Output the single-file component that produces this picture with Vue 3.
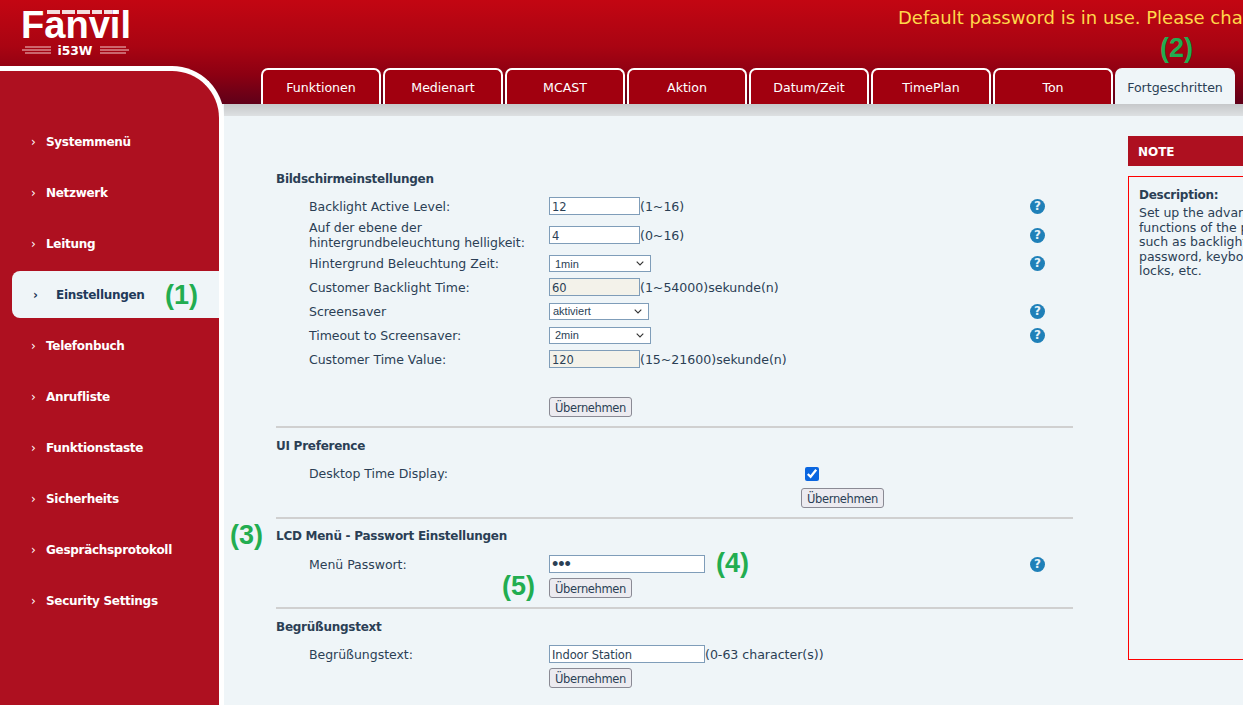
<script setup>
const menu = [
  'Systemmenü',
  'Netzwerk',
  'Leitung',
  'Einstellungen',
  'Telefonbuch',
  'Anrufliste',
  'Funktionstaste',
  'Sicherheits',
  'Gesprächsprotokoll',
  'Security Settings',
]

const tabs = ['Funktionen', 'Medienart', 'MCAST', 'Aktion', 'Datum/Zeit', 'TimePlan', 'Ton', 'Fortgeschritten']

const screenRows = [
  { label: 'Backlight Active Level:', type: 'input', value: '12', hint: '(1~16)', help: true },
  { label: 'Auf der ebene der hintergrundbeleuchtung helligkeit:', type: 'input', value: '4', hint: '(0~16)', help: true, tall: true },
  { label: 'Hintergrund Beleuchtung Zeit:', type: 'select', value: '1min', help: true, short: true },
  { label: 'Customer Backlight Time:', type: 'off', value: '60', hint: '(1~54000)sekunde(n)' },
  { label: 'Screensaver', type: 'select', value: 'aktiviert', help: true, narrow: true },
  { label: 'Timeout to Screensaver:', type: 'select', value: '2min', help: true },
  { label: 'Customer Time Value:', type: 'off', value: '120', hint: '(15~21600)sekunde(n)' },
]
</script>

<template>
  <div class="page">
    <header class="top">
      <svg class="logo" width="112" height="50" viewBox="0 0 112 50">
        <rect x="27" y="1" width="13" height="4" fill="#f4dcdc" />
        <rect x="42" y="1" width="13" height="4" fill="#f4dcdc" />
        <rect x="57" y="1" width="13" height="4" fill="#f4dcdc" />
        <rect x="72" y="1" width="10" height="4" fill="#f4dcdc" />
        <rect x="84" y="1" width="8" height="4" fill="#f4dcdc" />
        <rect x="94" y="1" width="5" height="4" fill="#f4dcdc" />
        <text x="1" y="29" class="logo-name" textLength="110" lengthAdjust="spacingAndGlyphs">Fanvil</text>
        <text x="55" y="46" class="logo-model" text-anchor="middle" textLength="35" lengthAdjust="spacingAndGlyphs">i53W</text>
        <g stroke="#f2c9c9" stroke-width="1">
          <path d="M5 38 H31 M2 41 H31 M5 44 H31" />
          <path d="M80 38 H106 M80 41 H109 M80 44 H106" />
        </g>
      </svg>
      <div class="warning">Default password is in use. Please change it</div>
    </header>

    <nav class="tabs">
      <a v-for="(tab, i) in tabs" :key="tab" class="tab" :class="{ current: i === 7 }">{{ tab }}</a>
    </nav>

    <aside class="side">
      <ul>
        <li v-for="item in menu" :key="item" :class="{ active: item === 'Einstellungen' }">
          <span class="arrow">›</span>{{ item }}
        </li>
      </ul>
    </aside>

    <main class="main">
      <div class="band"></div>
      <div class="body">
        <form class="form" @submit.prevent>
          <h3 class="head-first">Bildschirmeinstellungen</h3>
          <div v-for="row in screenRows" :key="row.label" class="row" :class="{ tall: row.tall, short: row.short }">
            <label>{{ row.label }}</label>
            <div class="control">
              <select v-if="row.type === 'select'" :class="{ narrow: row.narrow }">
                <option>{{ row.value }}</option>
              </select>
              <input v-else type="text" :value="row.value" :disabled="row.type === 'off'" />
              <span v-if="row.hint" class="hint">{{ row.hint }}</span>
            </div>
            <span v-if="row.help" class="help">?</span>
          </div>
          <div class="actions first"><button type="button">Übernehmen</button></div>
          <hr />

          <h3>UI Preference</h3>
          <div class="row">
            <label>Desktop Time Display:</label>
            <div class="control"><input class="check" type="checkbox" checked /></div>
          </div>
          <div class="actions ui"><button type="button">Übernehmen</button></div>
          <hr />

          <h3 class="head-lcd">LCD Menü - Passwort Einstellungen</h3>
          <div class="row pw">
            <label>Menü Passwort:</label>
            <div class="control"><input class="wide secret" type="password" value="123" /></div>
            <span class="help">?</span>
          </div>
          <div class="actions"><button type="button">Übernehmen</button></div>
          <hr />

          <h3 class="head-last">Begrüßungstext</h3>
          <div class="row">
            <label>Begrüßungstext:</label>
            <div class="control">
              <input class="wide" type="text" value="Indoor Station" />
              <span class="hint">(0-63 character(s))</span>
            </div>
          </div>
          <div class="actions"><button type="button">Übernehmen</button></div>
        </form>

        <section class="note">
          <h4>NOTE</h4>
          <div class="note-box">
            <strong>Description:</strong>
            <p>Set up the advanced<br />functions of the phone,<br />such as backlight, screen<br />password, keyboard<br />locks, etc.</p>
          </div>
        </section>
      </div>
    </main>

    <!-- callouts drawn over the screenshot -->
    <span class="mark m1">(1)</span>
    <span class="mark m2">(2)</span>
    <span class="mark m3">(3)</span>
    <span class="mark m4">(4)</span>
    <span class="mark m5">(5)</span>
  </div>
</template>

<style scoped>
.page {
  position: relative;
  width: 1243px;
  height: 705px;
  overflow: hidden;
  display: grid;
  grid-template-columns: 224px 1fr;
  grid-template-rows: 66px 38px 1fr;
  background: #eff5f8;
  font-family: "DejaVu Sans", Verdana, sans-serif;
  font-size: 12.5px;
  letter-spacing: -0.03px;
  color: #2b3f55;
}

.top {
  grid-area: 1 / 1 / 3 / 3;
  background: linear-gradient(#c30612 0%, #a90412 45%, #8c0012 72%, #5f0019 100%);
  display: flex;
  align-items: flex-start;
  white-space: nowrap;
}

.logo {
  margin: 9px 0 0 20px;
  flex: none;
}

.logo-name {
  font-family: "Liberation Sans", Arial, sans-serif;
  font-weight: 700;
  font-size: 39px;
  fill: #fff;
}

.logo-model {
  font-family: "DejaVu Sans", sans-serif;
  font-weight: 700;
  font-size: 13px;
  fill: #fff;
}

.warning {
  margin: 7px 0 0 766px;
  font-size: 18px;
  letter-spacing: 0;
  line-height: 22px;
  color: #ffd84a;
}

.tabs {
  grid-area: 2 / 2;
  display: flex;
  gap: 2px;
  padding: 2px 0 0 37px;
  z-index: 1;
}

.tab {
  width: 120px;
  height: 36px;
  box-sizing: border-box;
  border: 2px solid #fff;
  border-bottom: 0;
  border-radius: 7px 7px 0 0;
  background: #a1000f;
  color: #fff;
  font-size: 12.6px;
  text-align: center;
  line-height: 36px;
}

.tab.current {
  background: #eff5f8;
  border-color: #eff5f8;
  color: #2b3f55;
}

.side {
  grid-area: 2 / 1 / 4 / 2;
  box-sizing: border-box;
  width: 224px;
  border: solid #fff;
  border-width: 5px 5px 0 0;
  border-top-right-radius: 52px;
  background: #ae1020;
  z-index: 2;
}

.side ul {
  list-style: none;
  margin: 0;
  padding: 45px 0 0;
}

.side li {
  height: 51px;
  line-height: 53px;
  padding-left: 31px;
  color: #fff;
  font-size: 12px;
  font-weight: 700;
  letter-spacing: -0.3px;
}

.arrow {
  display: inline-block;
  width: 15px;
  font-weight: 400;
  font-size: 12px;
}

.side li.active {
  box-sizing: border-box;
  height: 47px;
  line-height: 49px;
  margin: 2px 0 2px 12px;
  padding-left: 21px;
  border-radius: 8px 0 0 8px;
  background: #eff5f8;
  color: #1f3a5a;
}

.side li.active .arrow {
  width: 23px;
  font-weight: 700;
}

.main {
  grid-area: 3 / 2;
  min-width: 0;
}

.band {
  height: 12px;
  background: linear-gradient(#c6c8ca, #dde0e2);
}

.body {
  display: flex;
  align-items: flex-start;
  padding-left: 52px;
}

.form {
  flex: none;
  width: 797px;
  padding-top: 50px;
}

h3 {
  margin: 5px 0 4px;
  height: 24px;
  line-height: 26px;
  font-size: 12px;
  font-weight: 700;
  letter-spacing: -0.26px;
  color: #2b3f55;
}

.head-first {
  margin-top: 0;
}

.head-lcd {
  margin: 4px 0 5px;
}

.row {
  display: grid;
  grid-template-columns: 240px 1fr 16px;
  align-items: center;
  height: 24px;
  margin-left: 33px;
  margin-right: 27px;
}

.row.tall {
  height: 34px;
}

.row.short {
  height: 23px;
}

.row label {
  line-height: 15px;
}

.control {
  display: flex;
  align-items: center;
}

.hint {
  font-size: 12.6px;
}

input[type="text"],
input[type="password"] {
  box-sizing: border-box;
  width: 91px;
  height: 18px;
  padding: 1px 2px 0;
  border: 1px solid #7f9db9;
  border-radius: 0;
  outline: 0;
  background: #fff;
  font-family: inherit;
  font-size: 11.5px;
  letter-spacing: -0.1px;
  color: #2b3f55;
}

input:disabled {
  background: #f3f2ea;
  color: #2b3f55;
}

input.wide {
  width: 156px;
}

input[type="password"].secret {
  padding: 0 2px;
  font-family: "Liberation Sans", Arial, sans-serif;
  font-size: 18px;
  letter-spacing: 0;
}

select {
  box-sizing: border-box;
  appearance: none;
  width: 102px;
  height: 17px;
  padding: 0 0 0 5px;
  border: 1px solid #7f9db9;
  border-radius: 0;
  background: #fff url("data:image/svg+xml,%3Csvg xmlns='http://www.w3.org/2000/svg' width='8' height='5'%3E%3Cpath d='M.7.7 4 4 7.3.7' fill='none' stroke='%23333' stroke-width='1.1'/%3E%3C/svg%3E") no-repeat right 6px center;
  font-family: "Liberation Sans", Arial, sans-serif;
  font-size: 11px;
  color: #2b3f55;
}

select.narrow {
  width: 100px;
  padding-left: 3px;
}

.check {
  width: 14px;
  height: 14px;
  margin: 2px 0 0 256px;
  accent-color: #0a66e0;
}

.help {
  width: 15px;
  height: 15px;
  border-radius: 50%;
  background: #1f80b8;
  color: #e6f2f8;
  font-size: 12px;
  font-weight: 700;
  letter-spacing: 0;
  line-height: 15px;
  text-align: center;
}

.actions {
  margin: 2px 0 0 273px;
  height: 20px;
}

.actions.first {
  margin-top: 26px;
}

.actions.ui {
  margin: 3px 0 0 525px;
}

button {
  box-sizing: border-box;
  display: block;
  width: 83px;
  height: 20px;
  padding: 1px 0 0;
  border: 1px solid #8a8a94;
  border-radius: 3px;
  background: #ecebf0;
  font-family: inherit;
  font-size: 11.5px;
  letter-spacing: -0.35px;
  color: #2b3f55;
}

hr {
  height: 2px;
  margin: 9px 0 0;
  border: 0;
  background: #d0d0d0;
}

.note {
  flex: none;
  width: 220px;
  margin: 20px 0 0 55px;
}

h4 {
  margin: 0;
  height: 30px;
  padding-left: 10px;
  line-height: 32px;
  font-size: 12px;
  font-weight: 700;
  color: #fff;
  background: #ae1020;
}

.note-box {
  box-sizing: border-box;
  height: 484px;
  margin-top: 10px;
  padding: 10px 10px;
  border: 1px solid #f00;
  white-space: nowrap;
}

.note-box strong {
  display: block;
  font-size: 12px;
  letter-spacing: -0.26px;
  line-height: 16px;
}

.note-box p {
  margin: 3px 0 0;
  line-height: 14.5px;
}

.mark {
  position: absolute;
  z-index: 3;
  font-family: "Liberation Sans", Arial, sans-serif;
  font-size: 27px;
  font-weight: 700;
  letter-spacing: 0;
  line-height: 30px;
  color: #22ad50;
}

.m1 { left: 165px; top: 280px; }
.m2 { left: 1160px; top: 33px; }
.m3 { left: 230px; top: 520px; }
.m4 { left: 716px; top: 548px; }
.m5 { left: 502px; top: 571px; }
</style>

<style>
html, body {
  margin: 0;
  overflow: hidden;
}
</style>
